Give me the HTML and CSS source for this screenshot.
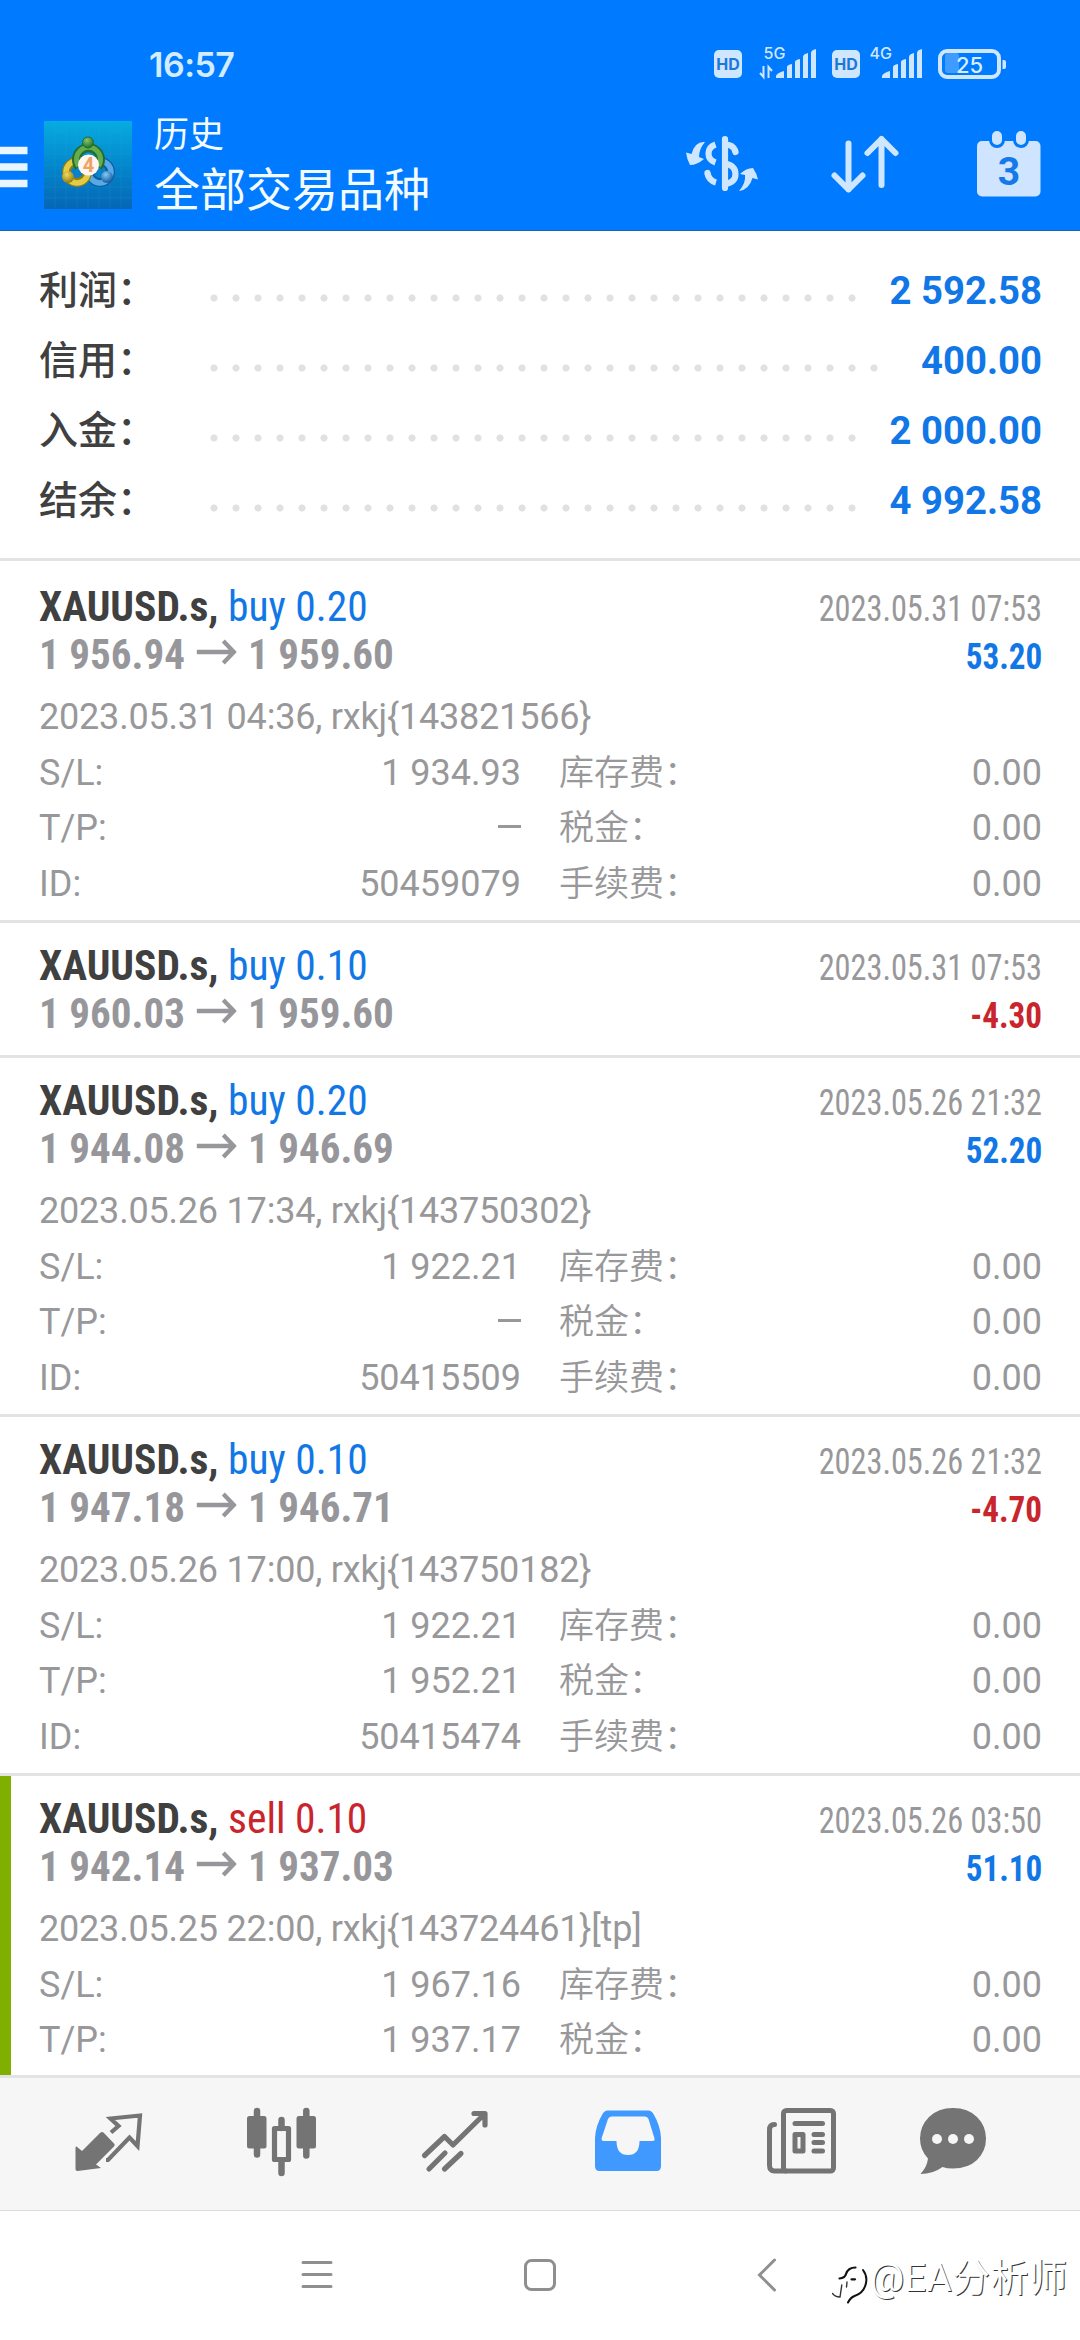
FILE: index.html
```html
<!DOCTYPE html>
<html lang="zh-CN">
<head>
<meta charset="utf-8">
<title>历史</title>
<link rel="stylesheet" href="styles.css">
</head>
<body>
<header class="header">
  <div class="status">
    <span class="clock">16:57</span>
    <svg class="status-icons" width="300" height="40" viewBox="710 44 300 40">
      <g fill="#cfe6ff">
        <rect x="714" y="50" width="28" height="28" rx="5"/>
        <rect x="832" y="50" width="28" height="28" rx="5"/>
        <path d="M776 78v-2q1-3 8-5v7zM787 78V67q0-2 5-3v14zM795 78V62q0-2 5-3v19zM803 78V57q0-3 5-4v25zM811 78V53q0-3 5-4v29z"/>
        <path d="M882 78v-2q1-3 8-5v7zM893 78V67q0-2 5-3v14zM901 78V62q0-2 5-3v19zM909 78V57q0-3 5-4v25zM917 78V53q0-3 5-4v29z"/>
        <path d="M1002.500 60h1.500q2 0 2 2v5q0 2-2 2h-1.500z"/>
      </g>
      <path d="M763.500 66v11l-3.500-4M768.500 78V67l3.500 4" fill="none" stroke="#cfe6ff" stroke-width="2"/>
      <text class="hd" x="728" y="69.500">HD</text>
      <text class="hd" x="846" y="69.500">HD</text>
      <text class="net" x="763.500" y="58.500">5G</text>
      <text class="net" x="869.500" y="58.500">4G</text>
      <rect x="945" y="53" width="14" height="20" rx="3" fill="#3f9bff"/>
      <rect x="940" y="51" width="59" height="26" rx="7" fill="none" stroke="#cfe6ff" stroke-width="4"/>
      <text class="batt" x="969.500" y="72.500">25</text>
    </svg>
  </div>
  <div class="appbar">
    <svg class="burger" width="28" height="42" viewBox="0 0 28 42"><path d="M0 4.500h27.500M0 21h27.500M0 37.500h27.500" stroke="#eaf6ff" stroke-width="7.500"/></svg>
    <svg class="logo" width="88" height="88" viewBox="0 0 88 88">
      <defs>
        <linearGradient id="lbg" x1="0" y1="0" x2="0" y2="1"><stop offset="0" stop-color="#06acdf"/><stop offset=".5" stop-color="#0487cd"/><stop offset="1" stop-color="#0566b4"/></linearGradient>
        <radialGradient id="lg" cx=".4" cy=".3" r=".7"><stop offset="0" stop-color="#8cc56c"/><stop offset="1" stop-color="#1f7030"/></radialGradient>
        <radialGradient id="ly" cx=".4" cy=".3" r=".7"><stop offset="0" stop-color="#eedb60"/><stop offset="1" stop-color="#8f7c14"/></radialGradient>
        <radialGradient id="lb" cx=".4" cy=".3" r=".7"><stop offset="0" stop-color="#86caf2"/><stop offset="1" stop-color="#135aa2"/></radialGradient>
      </defs>
      <rect width="88" height="88" fill="url(#lbg)"/>
      <path d="M11 0v88M22 0v88M33 0v88M44 0v88M55 0v88M66 0v88M77 0v88M0 11h88M0 22h88M0 33h88M0 44h88M0 55h88M0 66h88M0 77h88" stroke="#35b6e6" stroke-opacity=".15"/>
      <g fill="none">
        <circle cx="56" cy="51" r="10.500" stroke="#155a9f" stroke-width="9"/>
        <circle cx="56" cy="51" r="11" stroke="#56abe4" stroke-width="5.500"/>
        <circle cx="33" cy="51" r="10.500" stroke="#8f7d18" stroke-width="9"/>
        <circle cx="33" cy="51" r="11" stroke="#e3cc43" stroke-width="5.500"/>
        <path d="M35 46A12 12 0 1 1 54 46" stroke="#226d2d" stroke-width="9"/>
        <path d="M34.500 45A12 12 0 1 1 54.500 45" stroke="#63ad4e" stroke-width="5"/>
      </g>
      <circle cx="44" cy="21.500" r="5.500" fill="url(#lg)" stroke="#216e2c"/>
      <circle cx="24" cy="56" r="6" fill="url(#ly)"/>
      <circle cx="63" cy="56" r="6" fill="url(#lb)"/>
      <circle cx="44.500" cy="44" r="10.500" fill="#fff6f1"/>
      <text class="logo-num" x="44.500" y="51">4</text>
    </svg>
    <div class="titles"><div class="sub">历史</div><div class="main">全部交易品种</div></div>
    <svg class="i-cur" width="76" height="60" viewBox="684 134 76 60">
      <path d="M715.500 144.500Q708.500 147 708.500 153.500T715.500 162.500M725 144.500Q733 144.500 735.500 151M707.500 173.500Q709 180.500 716 182.500M725 163.500Q735.500 165.500 735.500 174T725 184" fill="none" stroke="#cfe6ff" stroke-width="6.200"/>
      <path d="M725 139v49M735 151l.5 1M707.500 173l.3 1" stroke="#cfe6ff" stroke-width="6.200" stroke-linecap="round"/>
      <path d="M705 142Q695 141 691.500 154L686 152.500Q687 160 690 165Q697 165 704 159L699 157Q699 149 705 142zM739 191Q749 190 752.500 178L758 179.500Q757 174 753 168Q746 168 740 174L745 175Q746 183 739 191z" fill="#cfe6ff"/>
    </svg>
    <svg class="i-sort" width="72" height="62" viewBox="829 133 72 62"><path d="M848.500 143.500v46M834.500 175.500l14 14 14-14M881.500 185V139M867.500 153l14-14 14 14" fill="none" stroke="#cfe6ff" stroke-width="6" stroke-linecap="round" stroke-linejoin="round"/></svg>
    <svg class="i-cal" width="66" height="68" viewBox="975 130 66 68">
      <rect x="976" y="141" width="63.500" height="55.500" rx="5" fill="#cfe4ff"/>
      <g fill="#cfe4ff" stroke="#007aff" stroke-width="3"><rect x="989.500" y="129.500" width="13" height="17" rx="6.500"/><rect x="1013.500" y="129.500" width="13" height="17" rx="6.500"/></g>
      <text class="cal-num" x="1008" y="184.500">3</text>
    </svg>
  </div>
</header>

<section class="summary">
  <div class="srow"><span class="sl">利润：</span><i class="dots"></i><b>2 592.58</b></div>
  <div class="srow"><span class="sl">信用：</span><i class="dots long"></i><b>400.00</b></div>
  <div class="srow"><span class="sl">入金：</span><i class="dots"></i><b>2 000.00</b></div>
  <div class="srow"><span class="sl">结余：</span><i class="dots"></i><b>4 992.58</b></div>
</section>

<main class="list">
  <article class="trade first">
    <div class="line"><span class="sym">XAUUSD.s, <span class="buy">buy 0.20</span></span><span class="date">2023.05.31 07:53</span></div>
    <div class="line"><span class="price">1 956.94<svg class="arr" viewBox="0 0 42 26"><path d="M0 13h39M28 2l11 11-11 11"/></svg>1 959.60</span><span class="pl up">53.20</span></div>
    <div class="comment">2023.05.31 04:36, rxkj{143821566}</div>
    <div class="grid"><span>S/L:</span><span>1 934.93</span><span>库存费：</span><span>0.00</span><span>T/P:</span><span><i class="dash"></i></span><span>税金：</span><span>0.00</span><span>ID:</span><span>50459079</span><span>手续费：</span><span>0.00</span></div>
  </article>
  <article class="trade short">
    <div class="line"><span class="sym">XAUUSD.s, <span class="buy">buy 0.10</span></span><span class="date">2023.05.31 07:53</span></div>
    <div class="line"><span class="price">1 960.03<svg class="arr" viewBox="0 0 42 26"><path d="M0 13h39M28 2l11 11-11 11"/></svg>1 959.60</span><span class="pl down">-4.30</span></div>
  </article>
  <article class="trade">
    <div class="line"><span class="sym">XAUUSD.s, <span class="buy">buy 0.20</span></span><span class="date">2023.05.26 21:32</span></div>
    <div class="line"><span class="price">1 944.08<svg class="arr" viewBox="0 0 42 26"><path d="M0 13h39M28 2l11 11-11 11"/></svg>1 946.69</span><span class="pl up">52.20</span></div>
    <div class="comment">2023.05.26 17:34, rxkj{143750302}</div>
    <div class="grid"><span>S/L:</span><span>1 922.21</span><span>库存费：</span><span>0.00</span><span>T/P:</span><span><i class="dash"></i></span><span>税金：</span><span>0.00</span><span>ID:</span><span>50415509</span><span>手续费：</span><span>0.00</span></div>
  </article>
  <article class="trade">
    <div class="line"><span class="sym">XAUUSD.s, <span class="buy">buy 0.10</span></span><span class="date">2023.05.26 21:32</span></div>
    <div class="line"><span class="price">1 947.18<svg class="arr" viewBox="0 0 42 26"><path d="M0 13h39M28 2l11 11-11 11"/></svg>1 946.71</span><span class="pl down">-4.70</span></div>
    <div class="comment">2023.05.26 17:00, rxkj{143750182}</div>
    <div class="grid"><span>S/L:</span><span>1 922.21</span><span>库存费：</span><span>0.00</span><span>T/P:</span><span>1 952.21</span><span>税金：</span><span>0.00</span><span>ID:</span><span>50415474</span><span>手续费：</span><span>0.00</span></div>
  </article>
  <article class="trade tp">
    <div class="line"><span class="sym">XAUUSD.s, <span class="sell">sell 0.10</span></span><span class="date">2023.05.26 03:50</span></div>
    <div class="line"><span class="price">1 942.14<svg class="arr" viewBox="0 0 42 26"><path d="M0 13h39M28 2l11 11-11 11"/></svg>1 937.03</span><span class="pl up">51.10</span></div>
    <div class="comment">2023.05.25 22:00, rxkj{143724461}[tp]</div>
    <div class="grid"><span>S/L:</span><span>1 967.16</span><span>库存费：</span><span>0.00</span><span>T/P:</span><span>1 937.17</span><span>税金：</span><span>0.00</span></div>
  </article>
</main>

<nav class="tabs">
  <span class="tab"><svg viewBox="72 2104 74 74">
    <path d="M76.500 2146.500l5.500 4.500L100.500 2132.500Q102 2131.500 103.500 2132.500L114.500 2144Q115 2145 114 2146.500L96 2164.500L101 2168L77.500 2171Q75.500 2171 75.500 2169V2148Q75.500 2146 76.500 2146.500z" fill="#747474"/>
    <path d="M111 2132.500l7.500-6.500-8-7.500 29.500-3-2.500 30.500-8-8.500-21.500 22.500h-2" fill="none" stroke="#747474" stroke-width="4.200"/></svg></span>
  <span class="tab"><svg viewBox="244.500 2104 74 74">
    <g fill="#747474"><rect x="246.500" y="2116" width="19.500" height="32.500" rx="2.500"/><rect x="296" y="2116" width="19.500" height="32.500" rx="2.500"/></g>
    <path d="M256.500 2111v43.500M305.800 2111v44.500M281 2120v8M281 2161v12" stroke="#747474" stroke-width="6.500" stroke-linecap="round"/>
    <rect x="274" y="2128.500" width="14" height="31" fill="none" stroke="#747474" stroke-width="5.200" stroke-linejoin="round"/></svg></span>
  <span class="tab"><svg viewBox="417.500 2104 74 74"><path d="M424 2155.500L444 2136.500L452.500 2145L484 2114M473.500 2113.500H484.500V2125M428.500 2169L444.500 2153M444 2169L460.500 2153.500" fill="none" stroke="#747474" stroke-width="5.200" stroke-linecap="round" stroke-linejoin="round"/></svg></span>
  <span class="tab"><svg viewBox="590.500 2104 74 74"><path fill-rule="evenodd" fill="#4099ff" d="M607 2110.500H648Q651 2110.500 653 2114Q660 2126 660.500 2138V2166Q660.500 2171 656 2171H599Q594.500 2171 594.500 2166V2138Q595 2126 602 2114Q604 2110.500 607 2110.500zM611 2116.500Q608.500 2116.500 607.500 2119L601 2138.500Q601 2141 603 2141H616Q616 2155 627.500 2155T639 2141H652Q654.500 2141 654 2138.500L648 2119Q647 2116.500 644.500 2116.500z"/></svg></span>
  <span class="tab"><svg viewBox="763.500 2104 74 74"><g fill="none" stroke="#747474" stroke-width="5" stroke-linejoin="round" stroke-linecap="round"><rect x="783" y="2110.500" width="50" height="60.500" rx="3"/><path d="M774 2124.500Q769 2124.500 769 2130V2165Q769 2171 774 2171H785"/><path d="M794.500 2123.500H822M813.500 2134.500H822M813.500 2142.500H822M813.500 2151H822"/><rect x="794.500" y="2134.500" width="8" height="16.500"/></g></svg></span>
  <span class="tab last"><svg viewBox="916 2104 74 74"><path fill="#747474" d="M953 2108Q968 2108 977 2117Q986 2126 986 2138.500Q986 2151 977 2160Q968 2168.500 953 2168.500Q947 2168.500 942.500 2167Q933 2174 920.500 2174Q927 2167 928 2158.500Q920 2150 920 2138.500Q920 2126 929 2117Q938 2108 953 2108z"/><g fill="#f6f6f6"><circle cx="937" cy="2139" r="5"/><circle cx="953" cy="2139" r="5"/><circle cx="969" cy="2139" r="5"/></g></svg></span>
</nav>

<footer class="sysnav">
  <svg class="n-menu" width="32" height="34" viewBox="0 0 32 34"><path d="M2 4.500h28M2 16.500h28M2 28.500h28"/></svg>
  <svg class="n-home" width="34" height="34" viewBox="0 0 34 34"><rect x="2.500" y="2.500" width="29" height="29" rx="6"/></svg>
  <svg class="n-back" width="20" height="34" viewBox="0 0 20 34"><path d="M17.500 2L2.500 17l15 15"/></svg>
  <div class="mark">
    <svg width="38" height="48" viewBox="0 0 38 48" fill="none">
      <path d="M7.500 20.500Q13 20 14 16Q16 9.500 23.500 9.500M19.500 21.300h3.500" stroke="#111" stroke-width="2.200"/>
      <path d="M31 12Q35.500 18 34 25Q32 35 22.500 38Q18.500 39.500 16 44.500" stroke="#111" stroke-width="2"/>
      <path d="M.5 35.500Q3 39 8 39L9.800 27M14.500 29l.5-5" stroke="#333" stroke-width="1.400"/>
    </svg>
    <span class="mark-text">@EA分析师</span>
  </div>
</footer>
</body>
</html>
```
FILE: styles.css
```css
* { box-sizing: border-box; }
body {
  margin: 0;
  width: 1080px;
  height: 2340px;
  overflow: hidden;
  background: #fff;
  color: #98989a;
  font-family: Roboto, "Noto Sans CJK SC", sans-serif;
  display: flex;
  flex-direction: column;
}
svg { display: block; flex: none; }

.header { height: 231px; background: #007aff; border-bottom: 1px solid #1463b5; }
.status { height: 100px; padding: 44px 70px 0 149px; display: flex; justify-content: space-between; }
.clock { font: 600 34px/41px Inter, Roboto, sans-serif; letter-spacing: -.5px; color: #d3ecff; }
.hd { font: 700 16px Inter, sans-serif; fill: #1a78dd; text-anchor: middle; }
.net { font: 500 16px Inter, sans-serif; fill: #cfe6ff; }
.batt { font: 500 22px Inter, sans-serif; fill: #d8eeff; text-anchor: middle; }
.appbar { display: flex; align-items: flex-start; color: #f2fbff; }
.burger { margin-top: 46px; }
.logo { margin: 21px 0 0 16px; }
.logo-num { font: 700 20px Roboto, sans-serif; fill: #f0a264; text-anchor: middle; }
.titles { width: 553px; padding-left: 22px; }
.sub { font-size: 35px; line-height: 40px; margin-top: 16px; }
.main { font-size: 46px; line-height: 60px; margin-top: 4px; }
.i-cur { margin-top: 34px; margin-left: -1px; }
.i-sort { margin: 33px 0 0 69px; }
.i-cal { margin: 30px 0 0 75px; }
.cal-num { font: 700 39px Roboto, sans-serif; fill: #1579e8; text-anchor: middle; }

.summary { height: 330px; padding: 25px 38px 0 39px; border-bottom: 3px solid #e3e3e3; }
.srow { display: flex; height: 70px; line-height: 70px; font-size: 39px; }
.sl { width: 164px; color: #404040; font-weight: 500; }
.dots {
  width: 660px;
  height: 70px;
  background: radial-gradient(circle at 50% 42px, #e1e1e1 3.200px, transparent 3.900px) 0 0 / 22px 70px;
}
.dots.long { width: 682px; }
.srow b { margin-left: auto; color: #1277e6; font-weight: 700; font-size: 38.300px; }

.list { height: 1514px; overflow: hidden; }
.trade { height: 359px; padding: 18px 38px 0 39px; border-bottom: 3px solid #e3e3e3; font-size: 36px; }
.first { height: 362px; padding-top: 21px; }
.short { height: 135px; }
.tp { border-left: 11px solid #7fb000; padding-left: 28px; }
.line { display: flex; justify-content: space-between; align-items: baseline; height: 48px; line-height: 48px; font-family: "Roboto Condensed", Roboto, sans-serif; }
.sym { font-size: 43px; font-weight: 700; color: #404040; transform: scaleX(.965); transform-origin: left; }
.buy { font-weight: 400; color: #1277e6; }
.sell { font-weight: 400; color: #c9252d; }
.price { font-size: 43px; font-weight: 700; color: #97979b; transform: scaleX(.955); transform-origin: left; }
.arr { display: inline-block; width: 42px; height: 26px; margin: 0 12px; vertical-align: 4px; fill: none; stroke: #97979b; stroke-width: 4.500; }
.date { transform: scaleX(.897); transform-origin: right; }
.pl { font-weight: 700; transform: scaleX(.92); transform-origin: right; }
.up { color: #1277e6; }
.down { color: #c9252d; }
.comment { margin-top: 11.500px; height: 56px; line-height: 55.500px; letter-spacing: -.2px; }
.grid { display: grid; grid-template-columns: 120px 362px 201px 1fr; grid-auto-rows: 55.500px; line-height: 55.500px; }
.grid span:nth-child(even) { text-align: right; }
.grid span:nth-child(4n+3) { padding-left: 38px; font-size: 35px; white-space: nowrap; font-weight: 350; }
.dash { display: inline-block; width: 23px; height: 3px; background: #98989a; vertical-align: 12px; }

.tabs { height: 136px; background: #f6f6f6; border-top: 3px solid #e3e3e3; border-bottom: 1px solid #dcdcdc; display: flex; padding-left: 22px; }
.tab { width: 173px; padding-top: 26px; display: flex; justify-content: center; }
.tab.last { width: 132px; }
.tab svg { width: 74px; height: 74px; }

.sysnav { flex: 1; display: flex; align-items: flex-start; padding: 47px 0 0 301px; fill: none; stroke: #8f8f8f; stroke-width: 3; }
.sysnav path { stroke-linecap: round; }
.n-home { margin-left: 190px; }
.n-back { margin-left: 200px; }
.mark { display: flex; margin-left: 55px; stroke: none; }
.mark-text { font-size: 38px; line-height: 40px; letter-spacing: .5px; color: #fff; text-shadow: 1px 1px 0 #333; white-space: nowrap; }
```
